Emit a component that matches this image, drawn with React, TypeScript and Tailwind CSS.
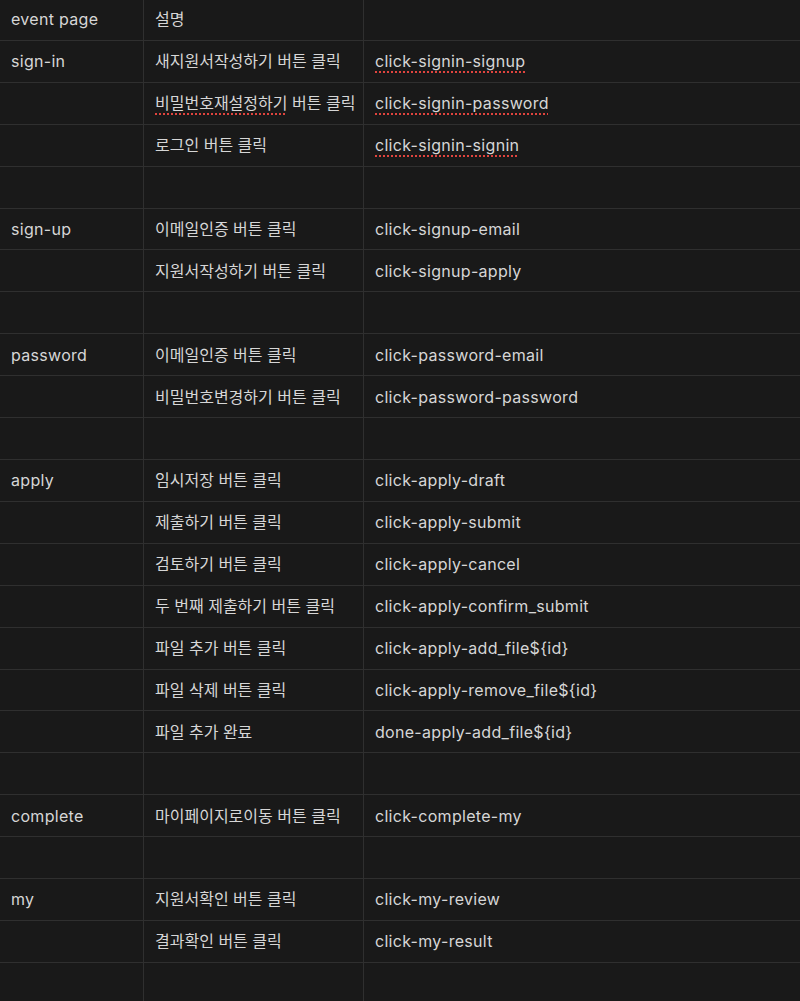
const rows: [string, string, string, boolean?, boolean?][] = [
  ['event page', '설명', ''],
  ['sign-in', '새지원서작성하기 버튼 클릭', 'click-signin-signup', false, true],
  ['', '비밀번호재설정하기 버튼 클릭', 'click-signin-password', true, true],
  ['', '로그인 버튼 클릭', 'click-signin-signin', false, true],
  ['', '', ''],
  ['sign-up', '이메일인증 버튼 클릭', 'click-signup-email'],
  ['', '지원서작성하기 버튼 클릭', 'click-signup-apply'],
  ['', '', ''],
  ['password', '이메일인증 버튼 클릭', 'click-password-email'],
  ['', '비밀번호변경하기 버튼 클릭', 'click-password-password'],
  ['', '', ''],
  ['apply', '임시저장 버튼 클릭', 'click-apply-draft'],
  ['', '제출하기 버튼 클릭', 'click-apply-submit'],
  ['', '검토하기 버튼 클릭', 'click-apply-cancel'],
  ['', '두 번째 제출하기 버튼 클릭', 'click-apply-confirm_submit'],
  ['', '파일 추가 버튼 클릭', 'click-apply-add_file${id}'],
  ['', '파일 삭제 버튼 클릭', 'click-apply-remove_file${id}'],
  ['', '파일 추가 완료', 'done-apply-add_file${id}'],
  ['', '', ''],
  ['complete', '마이페이지로이동 버튼 클릭', 'click-complete-my'],
  ['', '', ''],
  ['my', '지원서확인 버튼 클릭', 'click-my-review'],
  ['', '결과확인 버튼 클릭', 'click-my-result'],
  ['', '', ''],
];

const typo = 'underline decoration-dotted decoration-[#e0443e] decoration-2 underline-offset-[4px]';

function Desc({ text, typoWord }: { text: string; typoWord?: boolean }) {
  if (!typoWord || !text) return <span>{text}</span>;
  const [first, ...rest] = text.split(' ');
  return (
    <span>
      <span className={typo}>{first}</span>
      {' ' + rest.join(' ')}
    </span>
  );
}

export default function App() {
  return (
    <div
      className="w-[800px] h-[1001px] overflow-hidden bg-[#191919] text-[#d6d6d6] text-[16px]"
      style={{ fontFamily: 'Inter, "Noto Sans CJK KR", sans-serif' }}
    >
      <div className="-mt-[1px]">
        {rows.map(([page, desc, ev, descTypo, evTypo], i) => (
          <div key={i} className="grid grid-cols-[144px_220px_1fr] h-[41.92px] border-b border-[#2f2f2f]">
            <div className="flex items-center pl-[11px] border-r border-[#2f2f2f] tracking-[0.3px]">{page}</div>
            <div className="flex items-center pl-[11px] border-r border-[#2f2f2f] whitespace-nowrap">
              <Desc text={desc} typoWord={descTypo} />
            </div>
            <div className="flex items-center pl-[11px] whitespace-nowrap tracking-[0.3px]">
              {ev && <span className={evTypo ? typo : ''}>{ev}</span>}
            </div>
          </div>
        ))}
      </div>
    </div>
  );
}
